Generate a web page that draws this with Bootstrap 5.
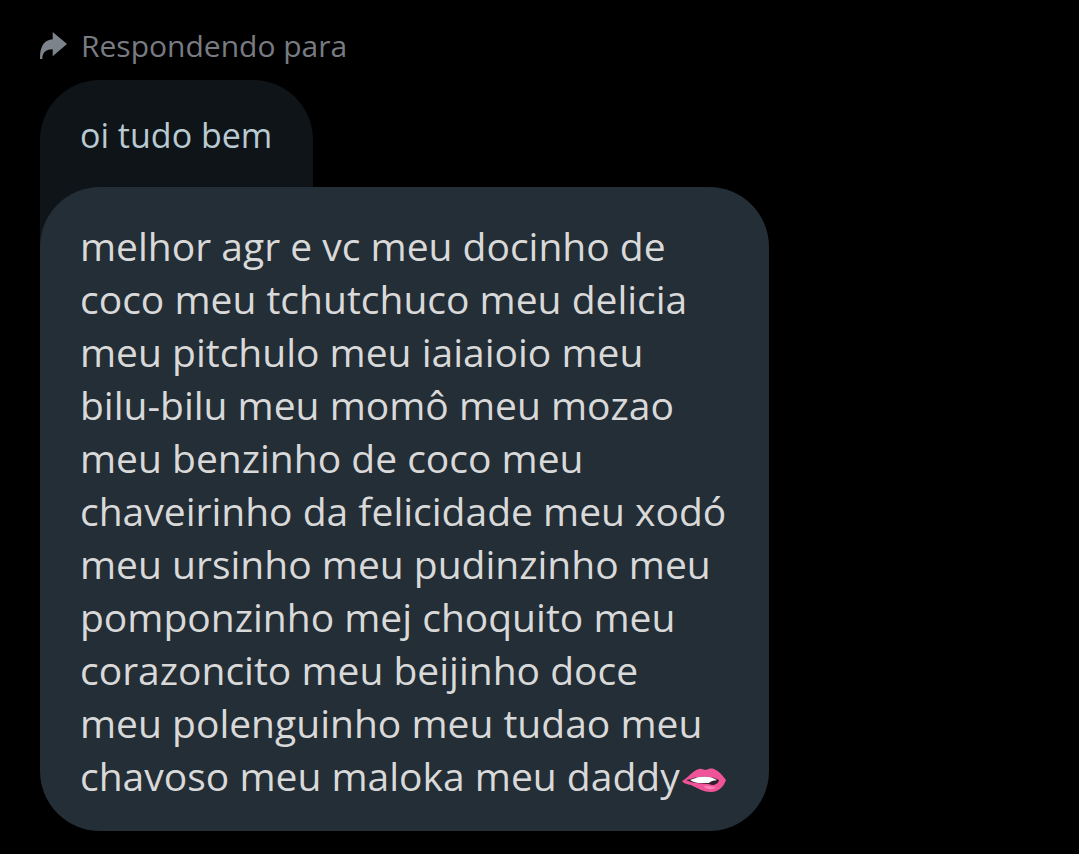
<!DOCTYPE html>
<html lang="pt-BR">
<head>
<meta charset="utf-8">
<meta name="viewport" content="width=device-width, initial-scale=1">
<title>Mensagens</title>
<link href="https://cdn.jsdelivr.net/npm/bootstrap@5.3.0/dist/css/bootstrap.min.css" rel="stylesheet">
<style>
body{background:#000;font-family:"Open Sans","Noto Sans",sans-serif;color:#d9d9d9}
.thread{padding:24px 40px}
.reply-label{color:#787c82;font-size:30px;line-height:44px;gap:14px}
.reply-label svg{color:#7c838b}
.quoted{background:#0f1418;color:#b9cad3;font-size:34px;line-height:54px;padding:28px 41px 85px 40px;margin-top:12px;border-radius:60px 60px 0 0}
.message{background:#242e36;font-size:39px;line-height:53px;padding:32px 40px 29px;margin-top:-60px;border-radius:60px;max-width:729px}
.lips{width:45px;height:25px;margin-left:2px}
</style>
</head>
<body>
<main class="thread d-flex flex-column align-items-start">
<div class="reply-label d-flex align-items-center">
<svg width="27" height="28" viewBox="0 0 27 28" fill="currentColor" aria-hidden="true"><path d="M12.7 0L27 12L12.7 24.3V17.3C6.500 17.3 2.300 20 2.300 27H0C-.3 15 4 7.700 12.700 7.300Z"/></svg>
<span>Respondendo para</span>
</div>
<div class="quoted">oi tudo bem</div>
<p class="message position-relative mb-0">melhor agr e vc meu docinho de coco meu tchutchuco meu delicia meu pitchulo meu iaiaioio meu bilu-bilu meu momô meu mozao meu benzinho de coco meu chaveirinho da felicidade meu xodó meu ursinho meu pudinzinho meu pomponzinho mej choquito meu corazoncito meu beijinho doce meu polenguinho meu tudao meu chavoso meu maloka meu daddy<svg class="lips" viewBox="0 0 45 25" role="img" aria-label="Lábio mordido">
<path fill="#ee5497" d="M0 13C6 10 11 2 17 1C20 0 22 2 24 2C26 1 29 0 32 1C37 3 41 8 44 12C42 18 37 24 29 24C20 24 14 19 9 17C5 16 2 16 0 13Z"/>
<path fill="#351c2b" d="M4 12C9 12 11 9 17 9C25 8 33 9 37 12C37 15 33 17 30 17C27 15 14 16 9 14Z"/>
<path fill="#fff" d="M8 12C12 11 14 9 18 9C25 8 31 9 35 12C33 13 30 12 27 15C20 15 13 16 8 12Z"/>
<path fill="#ff82b7" d="M22 18C26 17 30 19 34 19C31 22 24 22 22 18Z"/>
</svg></p>
</main>
<script src="https://cdn.jsdelivr.net/npm/bootstrap@5.3.0/dist/js/bootstrap.bundle.min.js"></script>
</body>
</html>
